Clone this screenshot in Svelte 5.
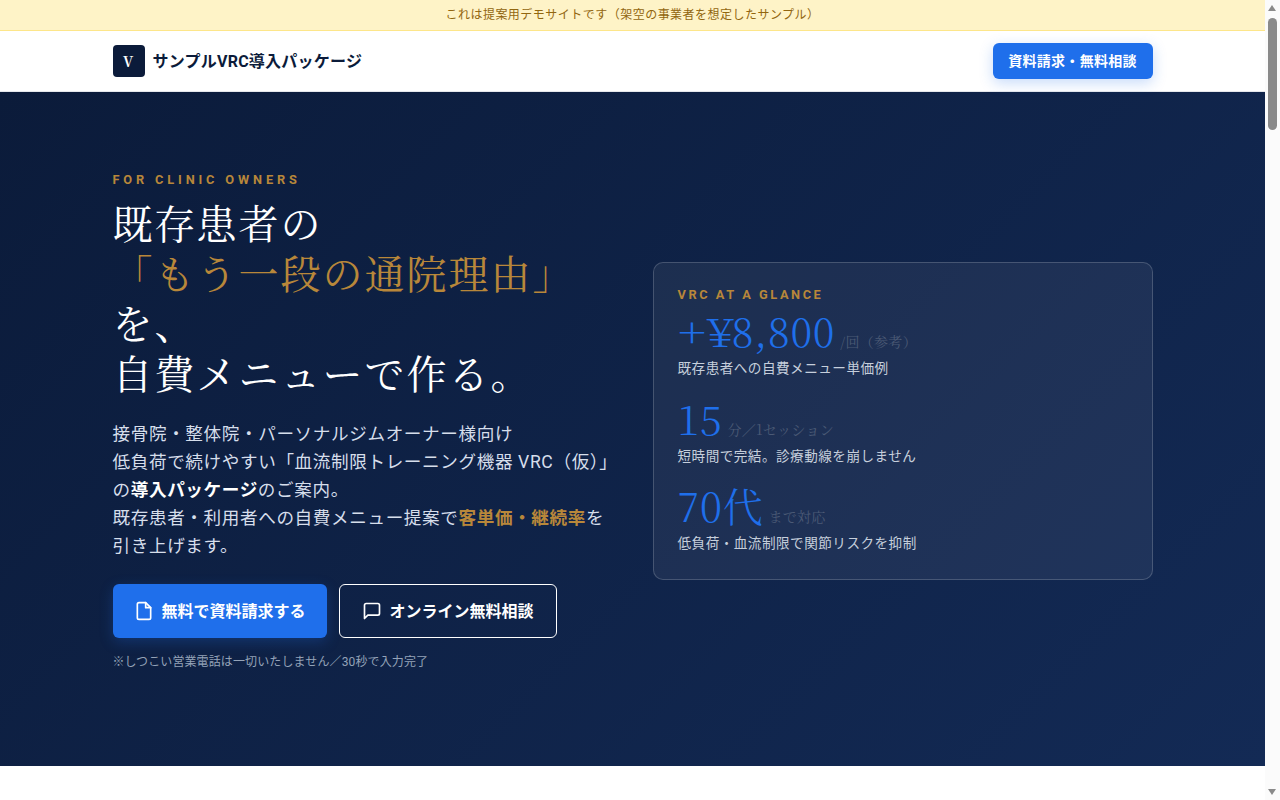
<script>
  const stats = [
    { sign: '+¥', num: '8,800', unit: '/回（参考）', label: '既存患者への自費メニュー単価例' },
    { sign: '', num: '15', unit: '分／1セッション', label: '短時間で完結。診療動線を崩しません' },
    { sign: '', num: '70代', unit: 'まで対応', label: '低負荷・血流制限で関節リスクを抑制' }
  ];
  let scrollY = $state(0);
  const thumbTop = $derived(18 + scrollY * (766 / 5470));
</script>

<svelte:window bind:scrollY />

<div class="page">
  <div class="notice">これは提案用デモサイトです（架空の事業者を想定したサンプル）</div>
  <header class="head">
    <div class="wrap headrow">
      <div class="brand"><span class="logo">V</span><span class="name">サンプルVRC導入パッケージ</span></div>
      <button class="cta">資料請求・無料相談</button>
    </div>
  </header>
  <section class="hero">
    <div class="wrap grid">
      <div>
        <p class="eyebrow">FOR CLINIC OWNERS</p>
        <h1>既存患者の<br /><span class="gold">「もう一段の通院理由」</span><br />を、<br />自費メニューで作る。</h1>
        <p class="lead">接骨院・整体院・パーソナルジムオーナー様向け<br />低負荷で続けやすい「血流制限トレーニング機器 VRC（仮）」の<strong>導入パッケージ</strong>のご案内。<br />既存患者・利用者への自費メニュー提案で<strong class="goldb">客単価・継続率</strong>を引き上げます。</p>
        <div class="btns">
          <button class="btn primary">
            <svg viewBox="0 0 24 24" width="20" height="20" fill="none" stroke="currentColor" stroke-width="2" stroke-linecap="round" stroke-linejoin="round"><path d="M14 2H6a2 2 0 0 0-2 2v16a2 2 0 0 0 2 2h12a2 2 0 0 0 2-2V8z" /><path d="M14 2v6h6" /></svg>
            <span class="btntext">無料で資料請求する</span>
          </button>
          <button class="btn ghost">
            <svg viewBox="0 0 24 24" width="20" height="20" fill="none" stroke="currentColor" stroke-width="2" stroke-linecap="round" stroke-linejoin="round"><path d="M21 15a2 2 0 0 1-2 2H7l-4 4V5a2 2 0 0 1 2-2h14a2 2 0 0 1 2 2z" /></svg>
            <span class="btntext">オンライン無料相談</span>
          </button>
        </div>
        <p class="note">※しつこい営業電話は一切いたしません／30秒で入力完了</p>
      </div>
      <aside class="card">
        <p class="cardtitle">VRC AT A GLANCE</p>
        {#each stats as s}
          <div class="stat">
            <div class="line">
              <span class="num">{#if s.sign}<span class="sign">{s.sign}</span>{/if}{s.num}</span>
              <span class="unit">{s.unit}</span>
            </div>
            <div class="label">{s.label}</div>
          </div>
        {/each}
      </aside>
    </div>
  </section>
  <section class="rest"></section>
</div>

<div class="scrollbar" aria-hidden="true">
  <span class="arrow up"></span>
  <span class="thumb" style="top: {thumbTop}px"></span>
  <span class="arrow down"></span>
</div>

<style>
  :global(html) { scrollbar-width: none; }
  :global(body) { margin: 0; background: #fff; font-family: Roboto, "Noto Sans CJK JP", sans-serif; letter-spacing: 0.03em; color: #0b1b3a; }
  p { margin: 0; }
  .page { padding-right: 15px; }
  .wrap { max-width: 1040px; margin: 0 auto; }
  .notice { height: 30px; background: #fef3c7; border-bottom: 1px solid #fde68a; color: #92660f; font-size: 12px; letter-spacing: 0.04em; line-height: 30px; text-align: center; }
  .head { background: #fff; border-bottom: 1px solid #e5e7eb; height: 60px; }
  .headrow { display: flex; justify-content: space-between; align-items: center; height: 60px; }
  .brand { display: flex; align-items: center; gap: 8px; }
  .logo { width: 32px; height: 32px; border-radius: 4px; background: #0b1b3a; color: #fff; display: flex; align-items: center; justify-content: center; font-family: "Noto Serif CJK JP", "Liberation Serif", serif; font-weight: 700; font-size: 14px; }
  .name { font-size: 16px; font-weight: 700; letter-spacing: 0.015em; color: #0b1b3a; margin-bottom: 3px; }
  .cta { height: 36px; width: 160px; border: 0; border-radius: 6px; background: #1f6feb; color: #fff; font: inherit; letter-spacing: 0.02em; font-size: 14px; font-weight: 700; box-shadow: 0 4px 14px rgba(31, 111, 235, 0.25); padding: 0 0 2px; }
  .hero { box-sizing: border-box; height: 674px; padding: 78px 0 94px; background: linear-gradient(135deg, #0b1b3a, #132a55); color: #fff; }
  .grid { display: grid; grid-template-columns: 500px 500px; gap: 40px; align-items: center; height: 100%; }
  .eyebrow { padding-top: 1px; color: #b8873a; font-size: 12.8px; font-weight: 700; letter-spacing: 0.3em; line-height: 18px; }
  h1 { margin: 8px 0 23px; font-family: "Noto Serif CJK JP", "Liberation Serif", serif; font-weight: 400; font-size: 40px; letter-spacing: 0.05em; line-height: 50px; }
  .gold { color: #b8873a; }
  .lead { font-size: 17.6px; letter-spacing: 0.035em; line-height: 28px; color: #d6deeb; }
  .lead strong { color: #fff; font-weight: 700; }
  .lead strong.goldb { color: #b8873a; }
  .btns { display: flex; gap: 12px; margin-top: 24px; }
  .btn { height: 54px; display: flex; align-items: center; gap: 8px; border-radius: 6px; font: inherit; letter-spacing: 0; font-size: 16px; font-weight: 700; color: #fff; }
  .btntext { margin-bottom: 2px; }
  .primary { padding: 0 21px; border: 0; background: #1f6feb; box-shadow: 0 4px 14px rgba(31, 111, 235, 0.25); }
  .ghost { padding: 0 22px; border: 1px solid #fff; background: transparent; }
  .note { margin: 15px 0 1px; font-size: 12px; letter-spacing: 0.01em; line-height: 18px; color: #94a3b8; }
  .card { box-sizing: border-box; padding: 23px 24px; border: 1px solid rgba(255, 255, 255, 0.18); border-radius: 10px; background: rgba(255, 255, 255, 0.06); height: 318px; }
  .cardtitle { color: #b8873a; font-size: 12.8px; font-weight: 700; letter-spacing: 0.2em; line-height: 18px; }
  .stat { margin-bottom: 13.5px; }
  .line { box-sizing: border-box; height: 54px; padding-top: 6px; display: flex; align-items: baseline; gap: 5px; }
  .num { font-family: "Noto Serif CJK JP", "Liberation Serif", serif; font-weight: 300; font-size: 40px; letter-spacing: 0.02em; line-height: 40px; color: #1f6feb; }
  .sign { display: inline-block; transform: scaleX(1.22); transform-origin: left center; margin-right: 8px; }
  .unit { font-family: "Noto Serif CJK JP", "Liberation Serif", serif; font-size: 14px; letter-spacing: 0.02em; color: #4b5a75; }
  .label { font-size: 13.6px; line-height: 20px; color: #c6cfdc; }
  .rest { height: 4670px; background: #fff; }
  .scrollbar { position: fixed; top: 0; right: 0; bottom: 0; width: 15px; background: #fbfbfb; }
  .thumb { position: absolute; left: 3px; width: 9px; height: 112px; border-radius: 5px; background: #8a8a8a; }
  .arrow { position: absolute; left: 3px; width: 0; height: 0; border-left: 4.5px solid transparent; border-right: 4.5px solid transparent; }
  .up { top: 5px; border-bottom: 6px solid #8a8a8a; }
  .down { bottom: 5px; border-top: 6px solid #8a8a8a; }
</style>
